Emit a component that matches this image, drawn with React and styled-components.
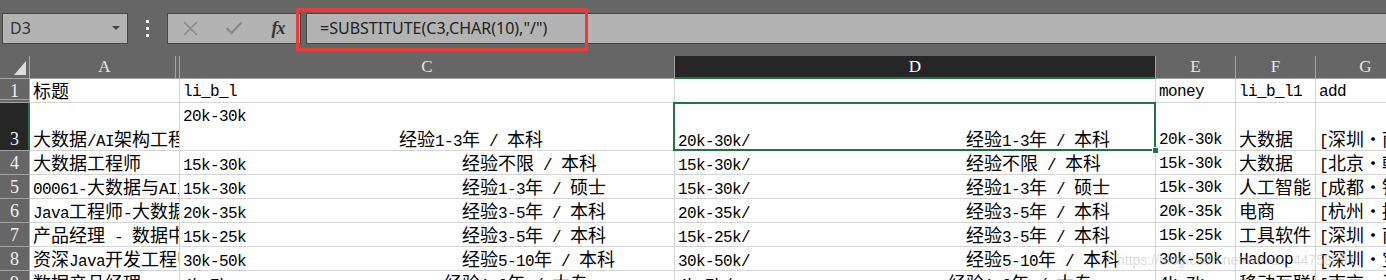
import React from 'react';
import styled, { createGlobalStyle, css } from 'styled-components';

const GlobalStyle = createGlobalStyle`
  html, body { margin: 0; padding: 0; background: #666666; }
  body { overflow: hidden; }
`;

const GREEN = '#217346';
const HEAD_LINE = '#a3a3a3';
const GRID_LINE = '#d4d4d4';

const Page = styled.div`
  position: relative;
  width: 1386px;
  height: 280px;
  overflow: hidden;
  background: #666666;
  font-family: "Noto Sans", "Liberation Sans", sans-serif;
`;

/* ---------- formula toolbar ---------- */
const Toolbar = styled.div`
  height: 56px;
  display: flex;
  align-items: center;
  padding-left: 2px;
  box-sizing: border-box;
`;

const NameBox = styled.div`
  width: 126px;
  height: 31px;
  box-sizing: border-box;
  border: 1px solid #474747;
  background: #b3b3b3;
  display: flex;
  align-items: center;
  justify-content: space-between;
  padding: 0 7px 0 7px;
  color: #333333;
  font-size: 16px;
`;

const Caret = styled.span`
  width: 0;
  height: 0;
  border-left: 4px solid transparent;
  border-right: 4px solid transparent;
  border-top: 4px solid #444444;
`;

const Handle = styled.div`
  width: 39px;
  height: 31px;
  display: flex;
  flex-direction: column;
  align-items: center;
  justify-content: center;
  gap: 4px;
`;

const HandleDot = styled.span`
  width: 3px;
  height: 3px;
  background: #f2f2f2;
`;

const ButtonGroup = styled.div`
  width: 134px;
  height: 31px;
  box-sizing: border-box;
  border: 1px solid #474747;
  background: #b3b3b3;
  display: flex;
  align-items: center;
`;

const IconSlot = styled.span`
  width: 44px;
  height: 29px;
  display: flex;
  align-items: center;
  justify-content: center;
  color: ${(p) => (p.$active ? '#333333' : '#8a8a8a')};
`;

const Fx = styled.span`
  font-family: "Liberation Serif", serif;
  font-style: italic;
  font-weight: bold;
  font-size: 18px;
  letter-spacing: -1px;
  color: #333333;
`;

const FormulaBox = styled.div`
  flex: 1;
  height: 31px;
  margin-left: 5px;
  box-sizing: border-box;
  border-top: 1px solid #474747;
  border-bottom: 1px solid #474747;
  border-left: 1px solid #474747;
  background: #b3b3b3;
  display: flex;
  align-items: center;
  padding-left: 13px;
  color: #222222;
  font-size: 16px;
`;

const Highlight = styled.div`
  position: absolute;
  left: 296px;
  top: 8px;
  width: 292px;
  height: 43px;
  box-sizing: border-box;
  border: 3px solid #ec3b3b;
  pointer-events: none;
`;

/* ---------- sheet ---------- */
const Sheet = styled.div`
  display: grid;
  grid-template-columns: 30px 150px 495px 481px 80px 80px 100px;
  grid-template-rows: 23px 24px 48px repeat(6, 24px);
`;

const Corner = styled.div`
  position: relative;
  background: #666666;
  border-right: 1px solid ${HEAD_LINE};
  border-bottom: 1px solid ${HEAD_LINE};
  &::after {
    content: '';
    position: absolute;
    right: 3px;
    bottom: 3px;
    width: 0;
    height: 0;
    border-left: 12px solid transparent;
    border-bottom: 14px solid #dcdcdc;
  }
`;

const ColHead = styled.div`
  position: relative;
  background: ${(p) => (p.$selected ? '#262626' : '#666666')};
  border-right: 1px solid ${HEAD_LINE};
  border-bottom: 1px solid ${HEAD_LINE};
  color: ${(p) => (p.$selected ? '#ffffff' : '#e6e6e6')};
  font-family: "Liberation Serif", serif;
  font-size: 17px;
  line-height: 22px;
  text-align: center;
  ${(p) =>
    p.$selected &&
    css`
      border-bottom-color: ${GREEN};
      box-shadow: inset 0 -1px 0 ${GREEN};
    `}
  ${(p) =>
    p.$hiddenAfter &&
    css`
      &::after {
        content: '';
        position: absolute;
        top: 0;
        bottom: 0;
        right: 3px;
        width: 1px;
        background: ${HEAD_LINE};
      }
    `}
`;

const RowHead = styled.div`
  position: relative;
  background: ${(p) => (p.$selected ? '#262626' : '#666666')};
  border-right: 1px solid ${(p) => (p.$selected ? GREEN : HEAD_LINE)};
  border-bottom: 1px solid ${HEAD_LINE};
  color: #f0f0f0;
  font-family: "Liberation Serif", serif;
  font-size: 18px;
  line-height: 22px;
  display: flex;
  align-items: flex-end;
  justify-content: center;
  ${(p) => p.$selected && css`box-shadow: inset -1px 0 0 ${GREEN};`}
  ${(p) =>
    p.$hiddenBelow &&
    css`
      &::after {
        content: '';
        position: absolute;
        left: 0;
        right: 0;
        bottom: 2px;
        height: 1px;
        background: ${HEAD_LINE};
      }
    `}
`;

const Cell = styled.div`
  position: relative;
  min-width: 0;
  background: #ffffff;
  border-right: 1px solid ${GRID_LINE};
  border-bottom: 1px solid ${GRID_LINE};
  ${(p) =>
    p.$selected &&
    css`
      z-index: 2;
      &::after {
        content: '';
        position: absolute;
        left: -2px;
        top: -1px;
        right: -1px;
        bottom: -1px;
        border: 2px solid ${GREEN};
        pointer-events: none;
      }
      &::before {
        content: '';
        position: absolute;
        right: -4px;
        bottom: -4px;
        width: 5px;
        height: 5px;
        background: ${GREEN};
        border: 1px solid #ffffff;
        z-index: 3;
      }
    `}
`;

const CellText = styled.div`
  height: 100%;
  overflow: hidden;
  display: flex;
  flex-direction: column;
  justify-content: flex-end;
  padding: 0 3px 0 3px;
  box-sizing: border-box;
  white-space: pre;
  color: #000000;
  line-height: 23px;
`;

const Line = styled.div`
  height: 23px;
  line-height: 23px;
`;

const Lat = styled.span`
  font-family: "Liberation Mono", monospace;
  font-size: 16px;
  letter-spacing: -0.6px;
`;

const Han = styled.span`
  font-family: "Noto Sans CJK SC", "Noto Sans CJK JP", sans-serif;
  font-size: 18px;
`;

const Watermark = styled.div`
  position: absolute;
  left: 1117px;
  top: 252px;
  font-family: "Liberation Sans", sans-serif;
  font-size: 14px;
  color: rgba(190, 190, 190, 0.55);
  white-space: nowrap;
  pointer-events: none;
`;

const CJK = /([\u2E80-\u9FFF\uFF00-\uFFEF\u3000-\u303F\u2022]+)/;

function Txt({ text }) {
  const parts = String(text).split(CJK);
  return parts.map((p, i) =>
    p === '' ? null : i % 2 ? <Han key={i}>{p}</Han> : <Lat key={i}>{p}</Lat>
  );
}

const GAP = ' '.repeat(24);

const rows = [
  { n: '1', cells: ['标题', 'li_b_l', '', 'money', 'li_b_l1', 'add'], hiddenBelow: true },
  {
    n: '3',
    selected: true,
    cells: [
      '大数据/AI架构工程师',
      ['20k-30k', GAP + '经验1-3年 / 本科'],
      '20k-30k/' + GAP + '经验1-3年 / 本科',
      '20k-30k',
      '大数据',
      '[深圳•南山区]',
    ],
  },
  { n: '4', cells: ['大数据工程师', '15k-30k' + GAP + '经验不限 / 本科', '15k-30k/' + GAP + '经验不限 / 本科', '15k-30k', '大数据', '[北京•朝阳区]'] },
  { n: '5', cells: ['00061-大数据与AI工程师', '15k-30k' + GAP + '经验1-3年 / 硕士', '15k-30k/' + GAP + '经验1-3年 / 硕士', '15k-30k', '人工智能', '[成都•锦江区]'] },
  { n: '6', cells: ['Java工程师-大数据', '20k-35k' + GAP + '经验3-5年 / 本科', '20k-35k/' + GAP + '经验3-5年 / 本科', '20k-35k', '电商', '[杭州•拱墅区]'] },
  { n: '7', cells: ['产品经理 - 数据中台', '15k-25k' + GAP + '经验3-5年 / 本科', '15k-25k/' + GAP + '经验3-5年 / 本科', '15k-25k', '工具软件', '[深圳•南山区]'] },
  { n: '8', cells: ['资深Java开发工程师', '30k-50k' + GAP + '经验5-10年 / 本科', '30k-50k/' + GAP + '经验5-10年 / 本科', '30k-50k', 'Hadoop', '[深圳•宝安区]'] },
  { n: '9', cells: ['数据产品经理', '4k-7k' + GAP + '经验1-3年 / 大专', '4k-7k/' + GAP + '经验1-3年 / 大专', '4k-7k', '移动互联网', '[南京•江宁区]'] },
];

const columns = [
  { label: 'A', hiddenAfter: true },
  { label: 'C' },
  { label: 'D', selected: true },
  { label: 'E' },
  { label: 'F' },
  { label: 'G' },
];

function CrossIcon() {
  return (
    <svg width="15" height="15" viewBox="0 0 15 15" fill="none" stroke="currentColor" strokeWidth="1.6">
      <path d="M1 1 L14 14 M14 1 L1 14" />
    </svg>
  );
}

function CheckIcon() {
  return (
    <svg width="18" height="14" viewBox="0 0 18 14" fill="none" stroke="currentColor" strokeWidth="2.4">
      <path d="M1.5 7 L6.5 12 L16.5 1.5" />
    </svg>
  );
}

export default function App() {
  return (
    <Page>
      <GlobalStyle />
      <Toolbar>
        <NameBox>
          <span>D3</span>
          <Caret />
        </NameBox>
        <Handle>
          <HandleDot />
          <HandleDot />
          <HandleDot />
        </Handle>
        <ButtonGroup>
          <IconSlot>
            <CrossIcon />
          </IconSlot>
          <IconSlot>
            <CheckIcon />
          </IconSlot>
          <IconSlot $active>
            <Fx>fx</Fx>
          </IconSlot>
        </ButtonGroup>
        <FormulaBox>=SUBSTITUTE(C3,CHAR(10),"/")</FormulaBox>
      </Toolbar>
      <Highlight />
      <Sheet>
        <Corner />
        {columns.map((c) => (
          <ColHead key={c.label} $selected={c.selected} $hiddenAfter={c.hiddenAfter}>
            {c.label}
          </ColHead>
        ))}
        {rows.map((r) => (
          <React.Fragment key={r.n}>
            <RowHead $selected={r.selected} $hiddenBelow={r.hiddenBelow}>
              {r.n}
            </RowHead>
            {r.cells.map((c, ci) => (
              <Cell key={ci} $selected={r.selected && ci === 2}>
                <CellText>
                  {Array.isArray(c) ? (
                    c.map((l, li) => (
                      <Line key={li}>
                        <Txt text={l} />
                      </Line>
                    ))
                  ) : (
                    <Line>
                      <Txt text={c} />
                    </Line>
                  )}
                </CellText>
              </Cell>
            ))}
          </React.Fragment>
        ))}
      </Sheet>
      <Watermark>https://blog.csdn.net/weixin_44758891</Watermark>
    </Page>
  );
}
